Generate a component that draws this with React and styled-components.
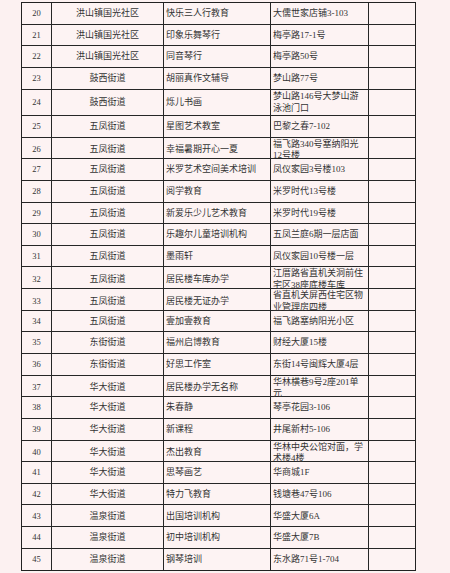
import React from "react";
import styled, { createGlobalStyle } from "styled-components";

const GlobalStyle = createGlobalStyle`
  html, body {
    margin: 0;
    padding: 0;
    background: #fcf1f1;
  }
  body {
    font-family: "Liberation Serif", "Noto Sans CJK SC", serif;
    color: #333;
  }
  * {
    box-sizing: border-box;
  }
`;

const Page = styled.div`
  padding: 2px 0 0 21px;
`;

const Sheet = styled.div`
  width: 395px;
  border: 1.5px solid #222;
  background: #fdf3f3;
`;

const Row = styled.div`
  display: grid;
  grid-template-columns: 30px 112px 107px 98px 1fr;
  height: ${(p) => (p.$tall ? "26.4px" : "21.65px")};
  border-bottom: 1px solid #262626;

  &:last-child {
    border-bottom: none;
  }
`;

const Cell = styled.div`
  display: flex;
  flex-direction: column;
  justify-content: center;
  align-items: ${(p) => (p.$left ? "flex-start" : "center")};
  padding: 1px 0 0 ${(p) => (p.$left ? "2px" : "0")};
  border-right: 1px solid #262626;
  font-size: 9px;
  line-height: 11.5px;
  white-space: nowrap;
  overflow: visible;

  &:last-child {
    border-right: none;
  }
`;

const Num = styled(Cell)`
  font-size: 8.5px;
`;

const rows = [
  [20, "洪山镇国光社区", "快乐三人行教育", ["大儒世家店铺3-103"]],
  [21, "洪山镇国光社区", "印象乐舞琴行", ["梅亭路17-1号"]],
  [22, "洪山镇国光社区", "同音琴行", ["梅亭路50号"]],
  [23, "鼓西街道", "胡丽真作文辅导", ["梦山路77号"]],
  [24, "鼓西街道", "烁儿书画", ["梦山路146号大梦山游", "泳池门口"], true],
  [25, "五凤街道", "星图艺术教室", ["巴黎之春7-102"]],
  [26, "五凤街道", "幸福暑期开心一夏", ["福飞路340号塞纳阳光", "12号楼"]],
  [27, "五凤街道", "米罗艺术空间美术培训", ["凤仪家园3号楼103"]],
  [28, "五凤街道", "阅学教育", ["米罗时代13号楼"]],
  [29, "五凤街道", "新爱乐少儿艺术教育", ["米罗时代19号楼"]],
  [30, "五凤街道", "乐趣尔儿童培训机构", ["五凤兰庭6期一层店面"]],
  [31, "五凤街道", "墨雨轩", ["凤仪家园10号楼一层"]],
  [32, "五凤街道", "居民楼车库办学", ["江厝路省直机关洞前住", "宅区38座底楼车库"]],
  [33, "五凤街道", "居民楼无证办学", ["省直机关屏西住宅区物", "业管理房四楼"]],
  [34, "五凤街道", "壹加壹教育", ["福飞路塞纳阳光小区"]],
  [35, "东街街道", "福州启博教育", ["财经大厦15楼"]],
  [36, "东街街道", "好思工作室", ["东街14号闽辉大厦4层"]],
  [37, "华大街道", "居民楼办学无名称", ["华林横巷9号2座201单", "元"]],
  [38, "华大街道", "朱春静", ["琴亭花园3-106"]],
  [39, "华大街道", "新课程", ["井尾新村5-106"]],
  [40, "华大街道", "杰出教育", ["华林中央公馆对面，学", "术楼4楼"]],
  [41, "华大街道", "思琴画艺", ["华商城1F"]],
  [42, "华大街道", "特力飞教育", ["钱塘巷47号106"]],
  [43, "温泉街道", "出国培训机构", ["华盛大厦6A"]],
  [44, "温泉街道", "初中培训机构", ["华盛大厦7B"]],
  [45, "温泉街道", "钢琴培训", ["东水路71号1-704"]],
];

export default function App() {
  return (
    <Page>
      <GlobalStyle />
      <Sheet>
        {rows.map(([no, street, name, addr, tall]) => (
          <Row key={no} $tall={tall}>
            <Num>{no}</Num>
            <Cell>{street}</Cell>
            <Cell $left>{name}</Cell>
            <Cell $left>
              {addr.map((line, i) => (
                <span key={i}>{line}</span>
              ))}
            </Cell>
            <Cell />
          </Row>
        ))}
      </Sheet>
    </Page>
  );
}
